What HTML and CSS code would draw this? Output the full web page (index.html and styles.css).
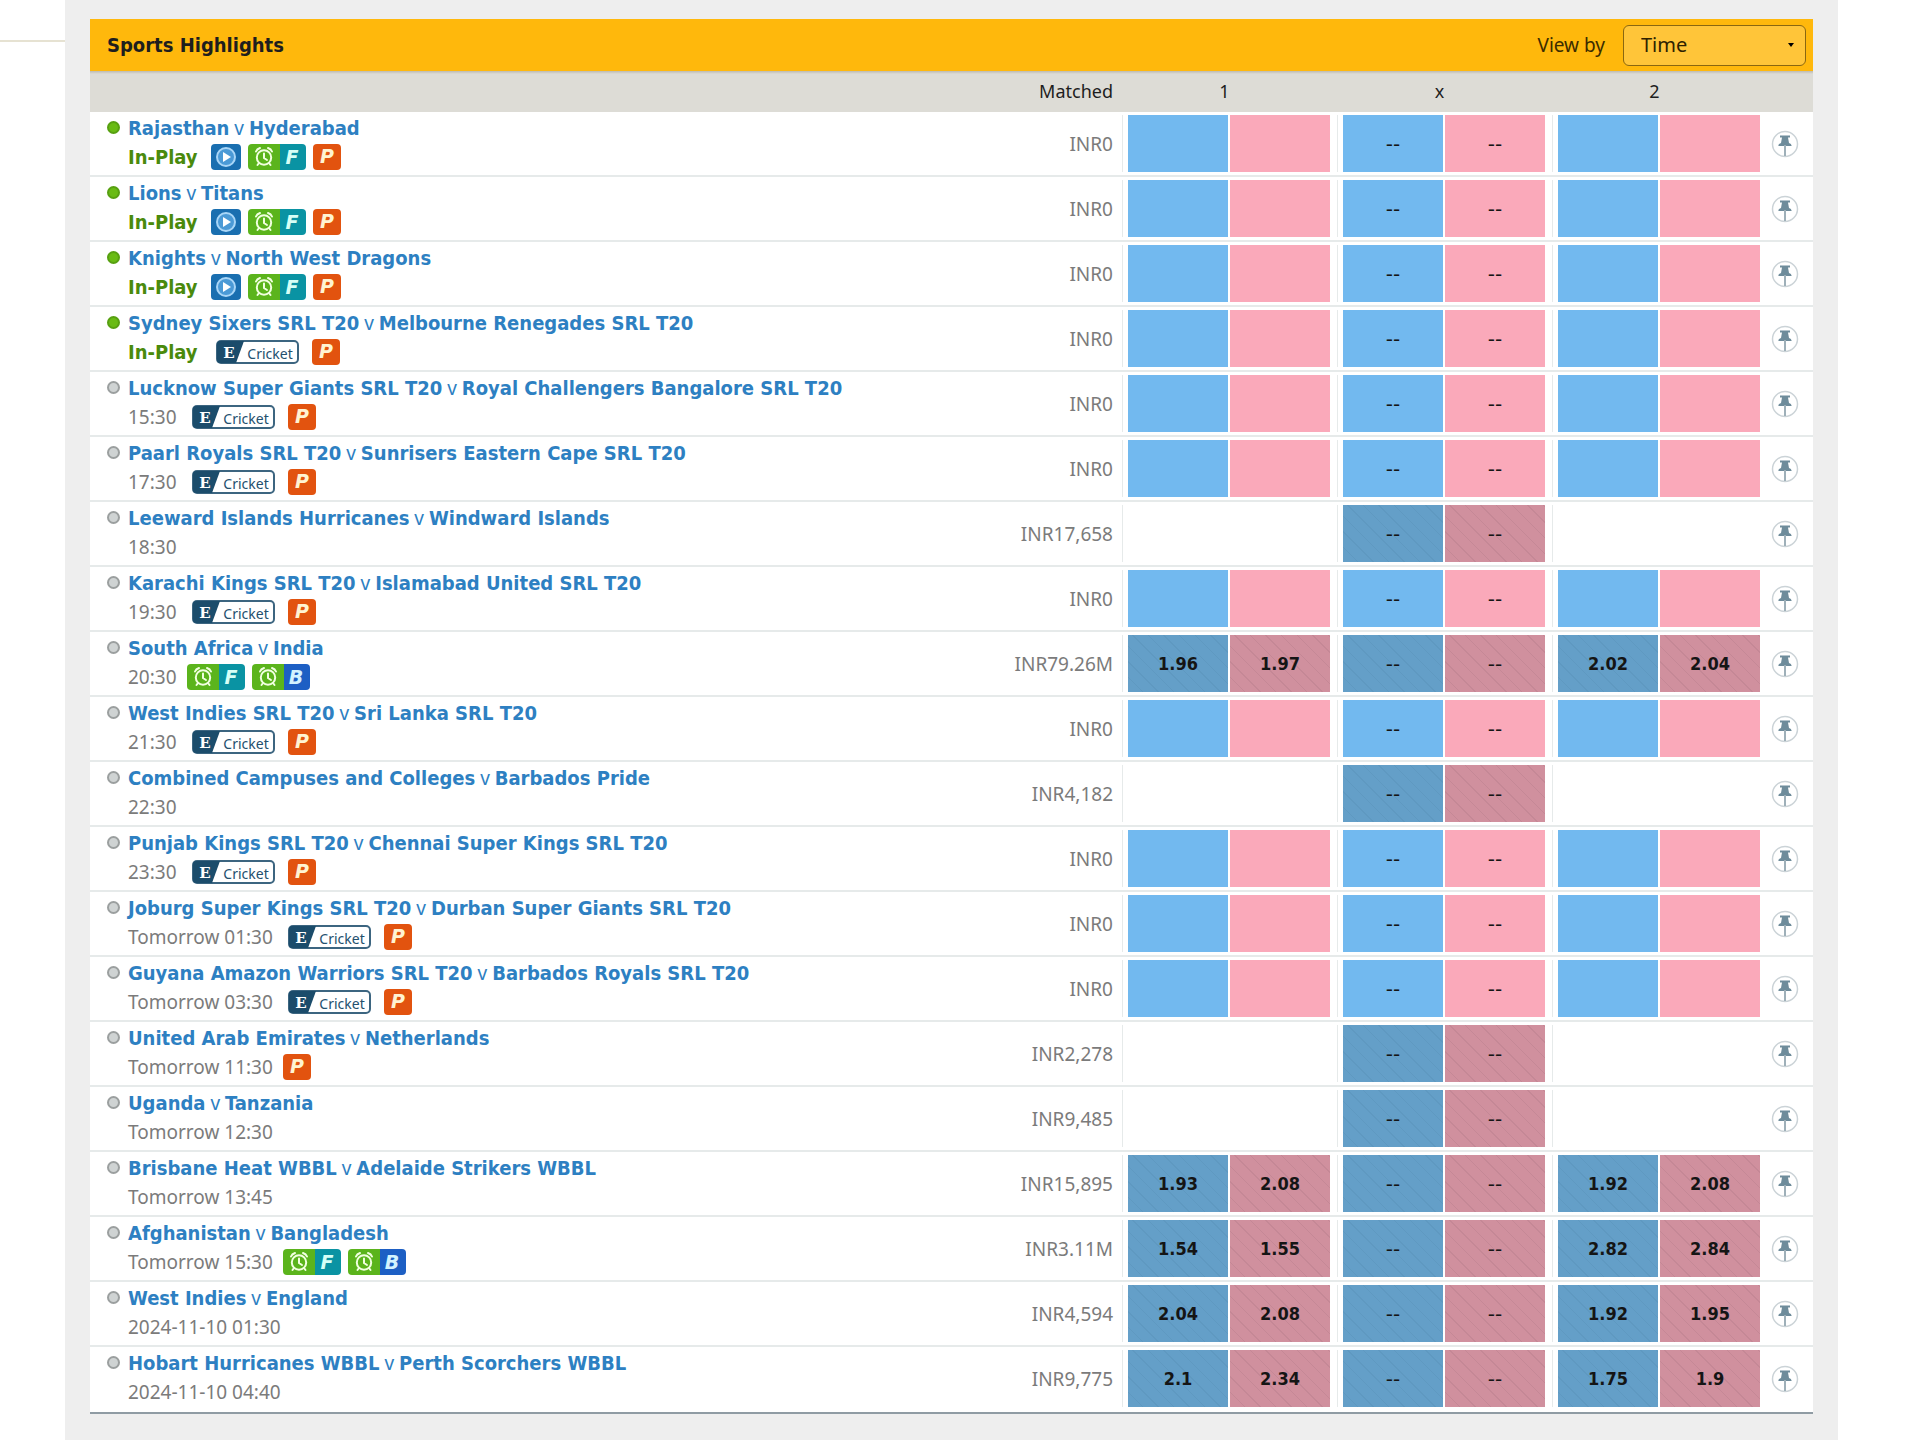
FILE: index.html
```html
<!DOCTYPE html>
<html lang="en">
<head>
<meta charset="utf-8">
<title>Sports Highlights</title>
<link rel="stylesheet" href="styles.css">
</head>
<body>
<svg class="sprite" aria-hidden="true">
  <symbol id="i-play" viewBox="0 0 30 26">
    <rect width="30" height="26" rx="4" fill="#1a6fb0"/>
    <circle cx="15" cy="13" r="9" fill="#4b9ad6" stroke="#a9d6f7" stroke-width="2"/>
    <path d="M12 8l8 5-8 5z" fill="#fff"/>
  </symbol>
  <symbol id="i-clock" viewBox="0 0 32 26">
    <path d="M4 0H32V26H4a4 4 0 0 1-4-4V4a4 4 0 0 1 4-4z" fill="#5bb41c"/>
    <g fill="none" stroke="#f1ffe0" stroke-width="2" stroke-linecap="round">
      <circle cx="16" cy="13.5" r="7.2"/>
      <path d="M16 9.500v4.500l3 2M8 7.500q1-2.500 4-3.500M24 7.500q-1-2.500-4-3.500M11 19l-1.500 2M21 19l1.500 2"/>
    </g>
  </symbol>
  <symbol id="i-f" viewBox="0 0 26 26">
    <path d="M0 0H22a4 4 0 0 1 4 4V22a4 4 0 0 1-4 4H0z" fill="#0a93a3"/>
    <text x="12" y="20" class="glyph" fill="#d6fff6">F</text>
  </symbol>
  <symbol id="i-b" viewBox="0 0 26 26">
    <path d="M0 0H22a4 4 0 0 1 4 4V22a4 4 0 0 1-4 4H0z" fill="#1d5fc4"/>
    <text x="12" y="20" class="glyph" fill="#d3f3ff">B</text>
  </symbol>
  <symbol id="i-p" viewBox="0 0 28 26">
    <rect width="28" height="26" rx="4" fill="#e2530f"/>
    <text x="14" y="19" class="glyph" fill="#fff3d2">P</text>
  </symbol>
  <symbol id="i-cricket" viewBox="0 0 83 24">
    <rect x="1" y="1" width="81" height="22" rx="4" fill="#fff" stroke="#3c6580" stroke-width="2"/>
    <path d="M4 1H28L20 23H4a3 3 0 0 1-3-3V4a3 3 0 0 1 3-3z" fill="#1b4c6b"/>
    <text x="13" y="18" class="glyph-e" fill="#fff">E</text>
    <text x="54" y="19" class="glyph-cricket" fill="#24506e">Cricket</text>
  </symbol>
  <symbol id="i-pin" viewBox="0 0 28 28">
    <circle cx="14" cy="14" r="12.500" fill="#fff" stroke="#cbd3d7" stroke-width="1.500"/>
    <path d="M9 5.500h10v2h-2l1 5.500q2.500.5 2.700 3h-13.400q.2-2.500 2.700-3l1-5.500h-2z" fill="#6e8c9b"/>
    <path d="M14 15v11" stroke="#9fb0b9" stroke-width="2"/>
  </symbol>
</svg>

<div class="page">
  <aside class="gutter-left"></aside>
  <main class="content">
    <section class="panel">
      <header class="panel-head">
        <h1>Sports Highlights</h1>
        <label for="view-by">View by</label>
        <span class="select">
          <select id="view-by"><option>Time</option><option>Competition</option></select>
          <svg viewBox="0 0 6 4" aria-hidden="true"><path d="M0 0h6L3 4z"/></svg>
        </span>
      </header>
      <table class="games">
        <colgroup>
          <col><col class="col-matched"><col class="col-odds"><col class="col-odds"><col class="col-odds"><col class="col-pin">
        </colgroup>
        <thead>
          <tr><th></th><th class="matched">Matched</th><th>1</th><th>x</th><th>2</th><th></th></tr>
        </thead>
        <tbody id="games"></tbody>
      </table>
    </section>
  </main>
</div>
<script src="games.js"></script>
</body>
</html>
```
FILE: styles.css
```css
* { box-sizing: border-box; }

body {
  margin: 0;
  background: #fff;
  color: #1e1e1e;
  font: 19px/26px "Noto Sans", Tahoma, sans-serif;
}

.sprite { display: none; }

.page {
  display: grid;
  grid-template-columns: 65px 1fr 82px;
  min-height: 100vh;
}

.gutter-left::before {
  content: "";
  display: block;
  height: 40px;
  border-bottom: 2px solid #e6e2d2;
}

.content {
  background: #eee;
  padding: 19px 25px;
}

.panel {
  background: #fff;
  border-bottom: 2px solid #8f9ba3;
}

.panel-head {
  display: flex;
  align-items: center;
  gap: 18px;
  height: 52px;
  padding: 0 7px 0 17px;
  background: #ffb80c;
}

.panel-head h1 {
  margin: 0 auto 0 0;
  font: 700 20px/26px "DejaVu Sans Condensed", Tahoma, sans-serif;
}

.panel-head label { color: #3b2c00; }

.select {
  display: grid;
  grid-template-columns: 1fr 18px;
  align-items: center;
  width: 183px;
}

.select select {
  grid-area: 1 / 1 / 2 / 3;
  height: 41px;
  padding: 0 17px;
  appearance: none;
  border: 1px solid #8a6710;
  border-radius: 6px;
  background: #ffc539;
  color: #2e2200;
  font: inherit;
  font-size: 20px;
}

.select svg {
  grid-area: 1 / 2;
  width: 6px;
  height: 4px;
  pointer-events: none;
}

.games {
  width: 100%;
  table-layout: fixed;
  border-collapse: separate;
  border-spacing: 0;
}

.col-matched { width: 120px; }
.col-odds { width: 215px; }
.col-pin { width: 46px; }

.games th {
  height: 41px;
  padding: 0 10px 2px 0;
  background: #dddcd6 linear-gradient(#bdbab0, #dddcd6) no-repeat 0 0 / 100% 3px;
  font-size: 18px;
  font-weight: 400;
}

.games .matched { text-align: right; padding-right: 9px; }

.games td {
  height: 65px;
  padding: 0;
  border-bottom: 2px solid #e6eaea;
}

.games tr:last-child td { border-bottom-color: #fff; }

.games td.matched { color: #7b7b7b; }

.event {
  display: grid;
  grid-template-columns: 13px 1fr;
  column-gap: 8px;
  padding: 0 0 2px 17px;
}

.dot {
  width: 13px;
  height: 13px;
  margin-top: 7px;
  border: 2px solid #9b9f9f;
  border-radius: 50%;
  background: #cfd3d3;
}

.dot.live { border-color: #57a011; background: #69bb14; }

.name {
  color: #2d80c2;
  font: 700 20px/28px "DejaVu Sans Condensed", Tahoma, sans-serif;
  text-decoration: none;
  white-space: nowrap;
}

.name span {
  font-family: "Noto Sans", Tahoma, sans-serif;
  font-size: 19px;
  font-weight: 400;
}

.meta {
  grid-column: 2;
  display: flex;
  align-items: center;
  gap: 7px;
  height: 30px;
}

.meta time { margin-right: 3px; color: #7b7b7b; }

.meta strong {
  margin-right: 6px;
  color: #4a8a0c;
  font: 700 20px/26px "DejaVu Sans Condensed", Tahoma, sans-serif;
}

.meta svg { height: 26px; }

.pair { display: flex; }
.w-26 { width: 26px; }
.w-28 { width: 28px; }
.w-30 { width: 30px; }
.w-32 { width: 32px; }

.meta .cricket { width: 83px; height: 24px; margin: 0 6px 0 5px; }

.glyph {
  font: italic 700 19px "DejaVu Sans", sans-serif;
  text-anchor: middle;
}

.glyph-e {
  font: 700 15px "DejaVu Serif", serif;
  text-anchor: middle;
}

.glyph-cricket {
  font: 400 14px "Noto Sans", sans-serif;
  text-anchor: middle;
}

.odds {
  display: flex;
  gap: 2px;
  height: 57px;
  padding-left: 5px;
  border-left: 1px solid #e6eaea;
}

.odds button {
  width: 100px;
  padding: 0;
  border: 0;
  color: #151515;
  font: 700 18px/26px "DejaVu Sans Condensed", Tahoma, sans-serif;
}

.odds .none {
  font-family: "DejaVu Sans", Verdana, sans-serif;
  font-size: 20px;
  font-weight: 400;
}

.back { background: #72b9ef; }
.lay { background: #faa9ba; }

.suspended .back {
  background: repeating-linear-gradient(45deg, #649fc8 0 10px, #5f99c1 10px 11px);
}

.suspended .lay {
  background: repeating-linear-gradient(45deg, #d0909e 0 10px, #c58896 10px 11px);
}

.pin {
  display: block;
  width: 28px;
  height: 28px;
  margin-left: 4px;
  padding: 0;
  border: 0;
  background: none;
}

.pin svg { display: block; width: 28px; height: 28px; }
```
FILE: games.js
```javascript
// [home, away, start, badges, matched, odds]; odds: "open", "draw" or four prices
const LIVE = "In-Play";
const games = [
  ["Rajasthan", "Hyderabad", LIVE, "play f p", "INR0", "open"],
  ["Lions", "Titans", LIVE, "play f p", "INR0", "open"],
  ["Knights", "North West Dragons", LIVE, "play f p", "INR0", "open"],
  ["Sydney Sixers SRL T20", "Melbourne Renegades SRL T20", LIVE, "cricket p", "INR0", "open"],
  ["Lucknow Super Giants SRL T20", "Royal Challengers Bangalore SRL T20", "15:30", "cricket p", "INR0", "open"],
  ["Paarl Royals SRL T20", "Sunrisers Eastern Cape SRL T20", "17:30", "cricket p", "INR0", "open"],
  ["Leeward Islands Hurricanes", "Windward Islands", "18:30", "", "INR17,658", "draw"],
  ["Karachi Kings SRL T20", "Islamabad United SRL T20", "19:30", "cricket p", "INR0", "open"],
  ["South Africa", "India", "20:30", "f b", "INR79.26M", ["1.96", "1.97", "2.02", "2.04"]],
  ["West Indies SRL T20", "Sri Lanka SRL T20", "21:30", "cricket p", "INR0", "open"],
  ["Combined Campuses and Colleges", "Barbados Pride", "22:30", "", "INR4,182", "draw"],
  ["Punjab Kings SRL T20", "Chennai Super Kings SRL T20", "23:30", "cricket p", "INR0", "open"],
  ["Joburg Super Kings SRL T20", "Durban Super Giants SRL T20", "Tomorrow 01:30", "cricket p", "INR0", "open"],
  ["Guyana Amazon Warriors SRL T20", "Barbados Royals SRL T20", "Tomorrow 03:30", "cricket p", "INR0", "open"],
  ["United Arab Emirates", "Netherlands", "Tomorrow 11:30", "p", "INR2,278", "draw"],
  ["Uganda", "Tanzania", "Tomorrow 12:30", "", "INR9,485", "draw"],
  ["Brisbane Heat WBBL", "Adelaide Strikers WBBL", "Tomorrow 13:45", "", "INR15,895", ["1.93", "2.08", "1.92", "2.08"]],
  ["Afghanistan", "Bangladesh", "Tomorrow 15:30", "f b", "INR3.11M", ["1.54", "1.55", "2.82", "2.84"]],
  ["West Indies", "England", "2024-11-10 01:30", "", "INR4,594", ["2.04", "2.08", "1.92", "1.95"]],
  ["Hobart Hurricanes WBBL", "Perth Scorchers WBBL", "2024-11-10 04:40", "", "INR9,775", ["2.1", "2.34", "1.75", "1.9"]]
];

const icon = (id, cls) => `<svg class="${cls}"><use href="#i-${id}"/></svg>`;
const badges = {
  play: icon("play", "w-30"),
  p: icon("p", "w-28"),
  cricket: icon("cricket", "cricket"),
  f: `<span class="pair">${icon("clock", "w-32")}${icon("f", "w-26")}</span>`,
  b: `<span class="pair">${icon("clock", "w-32")}${icon("b", "w-26")}</span>`
};

const price = (side, value) =>
  `<button type="button" class="${side}${value === "--" ? " none" : ""}">${value}</button>`;

const pair = (back, lay, suspended) =>
  `<td><div class="odds${suspended ? " suspended" : ""}">` +
  (back === null ? "" : price("back", back) + price("lay", lay)) +
  `</div></td>`;

document.getElementById("games").innerHTML = games.map(([home, away, start, tags, matched, odds]) => {
  const live = start === LIVE;
  const suspended = odds !== "open";
  const prices = odds === "open" ? ["", "", "", ""] : odds === "draw" ? [null, null, null, null] : odds;
  return `<tr>
    <td><div class="event">
      <span class="dot${live ? " live" : ""}"></span>
      <a class="name" href="#">${home}<span> v </span>${away}</a>
      <div class="meta">${live ? `<strong>${start}</strong>` : `<time>${start}</time>`}${
        tags.split(" ").filter(Boolean).map(t => badges[t]).join("")}</div>
    </div></td>
    <td class="matched">${matched}</td>
    ${pair(prices[0], prices[1], suspended)}${pair("--", "--", suspended)}${pair(prices[2], prices[3], suspended)}
    <td><button type="button" class="pin" aria-label="Pin">${icon("pin", "")}</button></td>
  </tr>`;
}).join("");
```
